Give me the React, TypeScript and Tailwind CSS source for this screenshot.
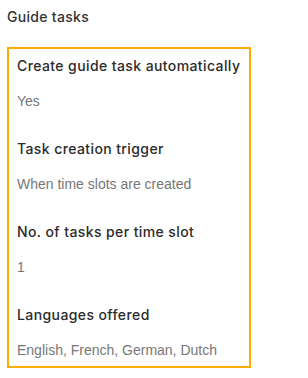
const fields = [
  { label: "Create guide task automatically", value: "Yes" },
  { label: "Task creation trigger", value: "When time slots are created" },
  { label: "No. of tasks per time slot", value: "1" },
  { label: "Languages offered", value: "English, French, German, Dutch" },
];

export default function App() {
  return (
    <div className="w-[308px] h-[378px] bg-white px-[7px] pt-[7px]">
      <h2 className="text-[14px] leading-[20px] font-medium tracking-[0.3px] text-[#333] font-['Inter',sans-serif]">Guide tasks</h2>
      <div className="mt-[20px] w-[244px] border-2 border-[#ffab00] px-[8px] pt-[7px] pb-[6px]">
        {fields.map((f, i) => (
          <div key={f.label} className={i > 0 ? "mt-[28px]" : ""}>
            <div className="whitespace-nowrap text-[14px] leading-[20px] font-medium tracking-[0.4px] text-[#2b2b2b] font-['Inter',sans-serif]">{f.label}</div>
            <div className="mt-[15px] text-[14px] leading-[20px] text-[#777] font-['Liberation_Sans',Arial,sans-serif]">{f.value}</div>
          </div>
        ))}
      </div>
    </div>
  );
}
